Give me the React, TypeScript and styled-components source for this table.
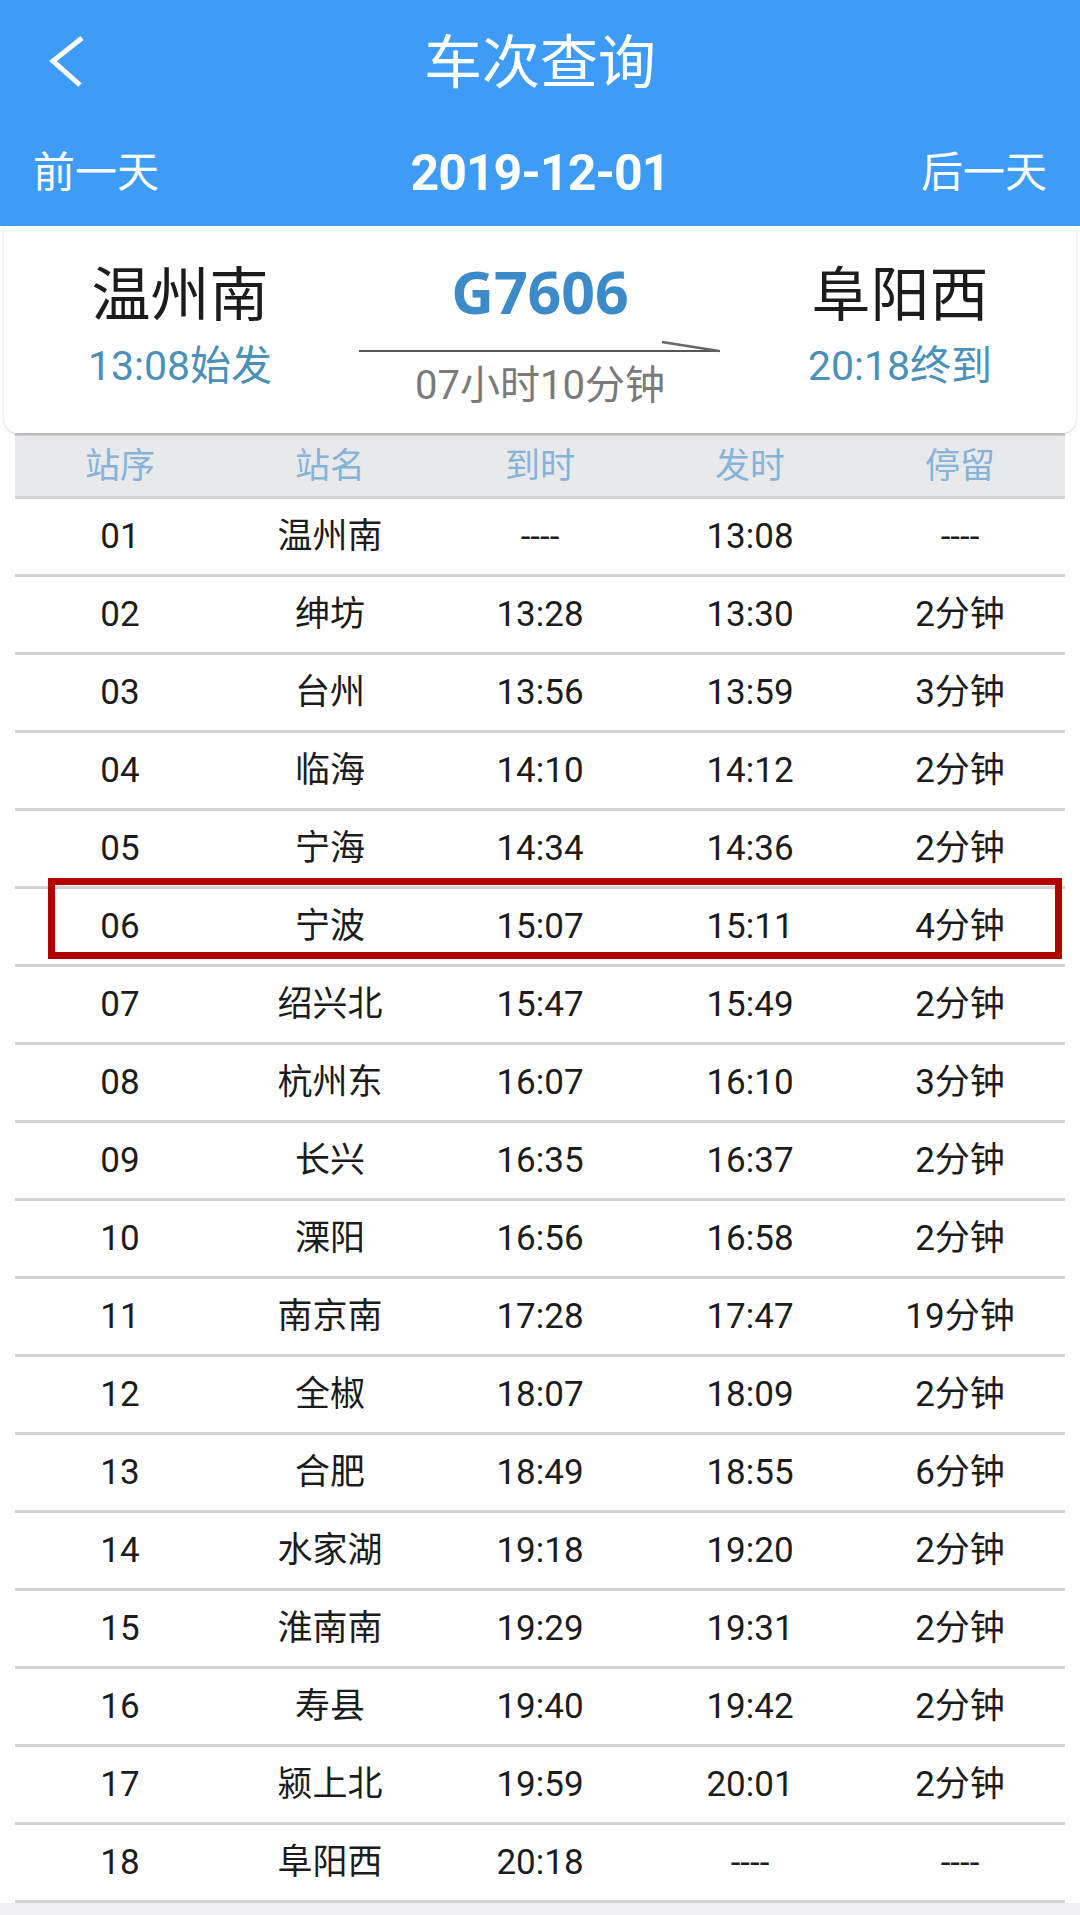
import React from "react";
import styled, { createGlobalStyle } from "styled-components";

const GlobalStyle = createGlobalStyle`
  html, body {
    margin: 0;
    padding: 0;
    background: #efeff1;
  }
  body {
    font-family: Roboto, "Noto Sans CJK SC", sans-serif;
  }
  * { box-sizing: border-box; }
`;

const Page = styled.div`
  width: 1080px;
  background: #ffffff;
`;

const Header = styled.header`
  height: 226px;
  background: #3f9cf6;
  color: #ffffff;
  display: flex;
  flex-direction: column;
`;

const TopBar = styled.div`
  height: 120px;
  padding-top: 5px;
  display: grid;
  grid-template-columns: 1fr auto 1fr;
  align-items: center;
`;

const BackButton = styled.div`
  padding-left: 46px;
  display: flex;
  align-items: center;
`;

const Title = styled.h1`
  margin: 0;
  font-size: 58px;
  font-weight: 400;
  line-height: 1;
  letter-spacing: 0;
`;

const DateBar = styled.div`
  height: 106px;
  display: grid;
  grid-template-columns: 1fr auto 1fr;
  align-items: center;
  padding: 0 33px;
`;

const DayLink = styled.span<{ $align: "left" | "right" }>`
  font-size: 42px;
  line-height: 1;
  text-align: ${(p) => p.$align};
`;

const DateText = styled.span`
  font-family: Roboto, sans-serif;
  font-weight: 700;
  font-size: 50px;
  line-height: 1;
  letter-spacing: -1px;
`;

const Card = styled.section`
  height: 207px;
  margin: 0 4px;
  background: #ffffff;
  border-radius: 0 0 14px 14px;
  box-shadow: 0 1px 3px rgba(0, 0, 0, 0.18);
  display: grid;
  grid-template-columns: 352px 1fr 352px;
  position: relative;
  z-index: 1;
`;

const StationCol = styled.div`
  display: flex;
  flex-direction: column;
  align-items: center;
  padding-top: 35px;
`;

const StationName = styled.div`
  font-size: 59px;
  line-height: 70px;
  color: #1c1c1c;
`;

const StationTime = styled.div`
  margin-top: 10px;
  font-size: 41px;
  line-height: 50px;
  color: #4a90b9;
`;

const MiddleCol = styled.div`
  display: flex;
  flex-direction: column;
  align-items: center;
  padding-top: 30px;
`;

const TrainNo = styled.div`
  font-family: "Open Sans", sans-serif;
  font-weight: 700;
  font-size: 59px;
  line-height: 70px;
  color: #3c8ac8;
`;

const Arrow = styled.svg`
  display: block;
  margin-top: 13px;
`;

const Duration = styled.div`
  font-size: 40px;
  line-height: 48px;
  color: #7a7a7a;
  margin-top: 9px;
`;

const Table = styled.div`
  margin: 0 15px;
`;

const Row = styled.div<{ $head?: boolean }>`
  position: relative;
  display: grid;
  grid-template-columns: repeat(5, 1fr);
  align-items: center;
  height: ${(p) => (p.$head ? "66px" : "78px")};
  background: ${(p) => (p.$head ? "#e8e9eb" : "#ffffff")};
  border-top: ${(p) => (p.$head ? "3px solid #cfcfd2" : "none")};
  border-bottom: 3px solid #d2d2d4;
  font-size: 35px;
  color: ${(p) => (p.$head ? "#86b3d8" : "#1c1c1c")};
`;

const Cell = styled.div`
  text-align: center;
  line-height: 1;
`;

const Highlight = styled.div`
  position: absolute;
  left: 33px;
  right: 3px;
  top: -11px;
  bottom: 5px;
  border: 7px solid #b50000;
  pointer-events: none;
`;

const stops: [string, string, string, string, string][] = [
  ["01", "温州南", "----", "13:08", "----"],
  ["02", "绅坊", "13:28", "13:30", "2分钟"],
  ["03", "台州", "13:56", "13:59", "3分钟"],
  ["04", "临海", "14:10", "14:12", "2分钟"],
  ["05", "宁海", "14:34", "14:36", "2分钟"],
  ["06", "宁波", "15:07", "15:11", "4分钟"],
  ["07", "绍兴北", "15:47", "15:49", "2分钟"],
  ["08", "杭州东", "16:07", "16:10", "3分钟"],
  ["09", "长兴", "16:35", "16:37", "2分钟"],
  ["10", "溧阳", "16:56", "16:58", "2分钟"],
  ["11", "南京南", "17:28", "17:47", "19分钟"],
  ["12", "全椒", "18:07", "18:09", "2分钟"],
  ["13", "合肥", "18:49", "18:55", "6分钟"],
  ["14", "水家湖", "19:18", "19:20", "2分钟"],
  ["15", "淮南南", "19:29", "19:31", "2分钟"],
  ["16", "寿县", "19:40", "19:42", "2分钟"],
  ["17", "颍上北", "19:59", "20:01", "2分钟"],
  ["18", "阜阳西", "20:18", "----", "----"],
];

export default function App() {
  return (
    <>
      <GlobalStyle />
      <Page>
        <Header>
          <TopBar>
            <BackButton>
              <svg width="40" height="56" viewBox="0 0 40 56">
                <polyline
                  points="36,3 7,26 34,50"
                  fill="none"
                  stroke="#ffffff"
                  strokeWidth="5"
                />
              </svg>
            </BackButton>
            <Title>车次查询</Title>
            <div />
          </TopBar>
          <DateBar>
            <DayLink $align="left">前一天</DayLink>
            <DateText>2019-12-01</DateText>
            <DayLink $align="right">后一天</DayLink>
          </DateBar>
        </Header>
        <Card>
          <StationCol>
            <StationName>温州南</StationName>
            <StationTime>13:08始发</StationTime>
          </StationCol>
          <MiddleCol>
            <TrainNo>G7606</TrainNo>
            <Arrow width="362" height="14" viewBox="0 0 362 14">
              <line x1="0" y1="12" x2="361" y2="12" stroke="#555" strokeWidth="2" />
              <line x1="303" y1="3" x2="360" y2="12" stroke="#666" strokeWidth="2.5" />
            </Arrow>
            <Duration>07小时10分钟</Duration>
          </MiddleCol>
          <StationCol>
            <StationName>阜阳西</StationName>
            <StationTime>20:18终到</StationTime>
          </StationCol>
        </Card>
        <Table>
          <Row $head>
            <Cell>站序</Cell>
            <Cell>站名</Cell>
            <Cell>到时</Cell>
            <Cell>发时</Cell>
            <Cell>停留</Cell>
          </Row>
          {stops.map((s) => (
            <Row key={s[0]}>
              {s.map((v, i) => (
                <Cell key={i}>{v}</Cell>
              ))}
              {s[0] === "06" && <Highlight />}
            </Row>
          ))}
        </Table>
      </Page>
    </>
  );
}
